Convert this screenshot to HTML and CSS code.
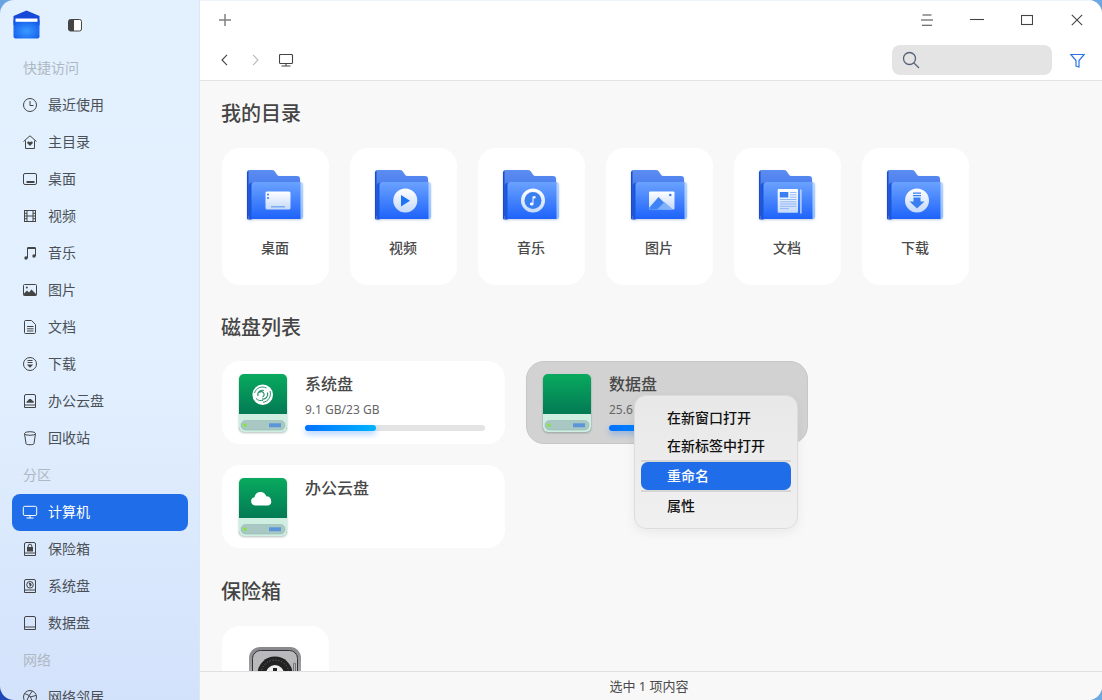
FILE: index.html
```html
<!DOCTYPE html>
<html lang="zh-CN">
<head>
  <meta charset="UTF-8">
  <title>文件管理器</title>
  <link rel="stylesheet" href="styles.css">
</head>
<body>
  <svg class="defs" aria-hidden="true">
    <defs>
      <linearGradient id="gBack" x1="0" y1="0" x2="0" y2="1"><stop offset="0" stop-color="#5b8df2"/><stop offset="1" stop-color="#2b62e0"/></linearGradient>
      <linearGradient id="gFront" x1="0" y1="0" x2="0" y2="1"><stop offset="0" stop-color="#6aa2ff"/><stop offset="1" stop-color="#1e63fb"/></linearGradient>
      <linearGradient id="gEdge" x1="0" y1="0" x2="0" y2="1"><stop offset="0" stop-color="#b9d8ff"/><stop offset="1" stop-color="#8dbcff"/></linearGradient>
      <linearGradient id="gGlyph" x1="0" y1="0" x2="0" y2="1"><stop offset="0" stop-color="#ffffff"/><stop offset="1" stop-color="#c4d9fb"/></linearGradient>
      <linearGradient id="gDrive" x1="0" y1="0" x2="0" y2="1"><stop offset="0" stop-color="#09aa5f"/><stop offset="1" stop-color="#00644f"/></linearGradient>
      <radialGradient id="gLogo" cx=".5" cy=".6" r=".7"><stop offset="0" stop-color="#3a9bff"/><stop offset="1" stop-color="#0f55ea"/></radialGradient>
      <linearGradient id="gSafe" x1="0" y1="0" x2="0" y2="1"><stop offset="0" stop-color="#88888c"/><stop offset="1" stop-color="#c4c4c8"/></linearGradient>

      <symbol id="folder" viewBox="0 0 56 50">
        <path d="M0 3a3 3 0 0 1 3-3h22c2 0 2.500 1 3.500 2.500S30.500 6 32 6h18a3 3 0 0 1 3 3v37H0z" fill="url(#gBack)"/>
        <path d="M0 3a3 3 0 0 1 1.500-2.600V49.500A2 2 0 0 1 0 47z" fill="#1a4bc9"/>
        <path d="M1.500 49.500H5V15a3 3 0 0 1 1-2.500c-2 0-4.500 1.500-4.500 4z" fill="#1f55d8"/>
        <path d="M50 12h3a3 3 0 0 1 3 3v31a3 3 0 0 1-3 3h-3z" fill="url(#gEdge)"/>
        <path d="M4.500 15a3 3 0 0 1 3-3H53.500v37H4.500z" fill="url(#gFront)"/>
      </symbol>

      <symbol id="drive" viewBox="0 0 48 58">
        <rect width="48" height="57.500" rx="5" fill="url(#gDrive)"/>
        <path d="M0 40h48v13a5 5 0 0 1-5 5H5a5 5 0 0 1-5-5z" fill="#cdeee0"/>
        <rect x="2" y="46.500" width="44" height="9.500" rx="4.500" fill="#a9c7c3" stroke="#8fb2ae" stroke-width=".5"/>
        <circle cx="6" cy="51.300" r="2" fill="#8be04e"/>
        <rect x="30" y="49.300" width="12" height="4" fill="#5b97d8"/>
      </symbol>

      <symbol id="i-clock" viewBox="0 0 16 16"><circle cx="8" cy="8" r="6.500"/><path d="M8 4v4.500h3.500"/></symbol>
      <symbol id="i-home" viewBox="0 0 16 16"><path d="M1.500 7.500 8 1.800l6.500 5.700M3.500 6.500v8h9v-8"/><path class="solid" d="M8 12 5.300 9.300c-.6-1.500 1.600-2.300 2.700-1.100 1.100-1.200 3.300-.4 2.700 1.100z"/></symbol>
      <symbol id="i-desktop" viewBox="0 0 16 16"><rect x="1.500" y="2.500" width="13" height="11" rx="1.500"/><path class="heavy" d="M4.500 11h8"/></symbol>
      <symbol id="i-film" viewBox="0 0 16 16"><rect x="2.500" y="2.500" width="11" height="11"/><path d="M5 2.500v11M11 2.500v11M2.500 5.300H5M2.500 8H5M2.500 10.700H5M11 5.300h2.500M11 8h2.500M11 10.700h2.500M5 8h6"/></symbol>
      <symbol id="i-music" viewBox="0 0 16 16"><path d="M5.500 13V3h8v8"/><path class="heavy" d="M5.500 3h8"/><circle class="solid" cx="4" cy="13" r="1.700"/><circle class="solid" cx="12" cy="11" r="1.700"/></symbol>
      <symbol id="i-image" viewBox="0 0 16 16"><rect x="1.500" y="2.500" width="13" height="11" rx="1"/><circle class="solid" cx="4.800" cy="5.500" r="1"/><path class="solid" d="M1.500 13.500V12L5 8.500l2 2 2.500-3 5 5v1z"/></symbol>
      <symbol id="i-doc" viewBox="0 0 16 16"><path d="M3.500 1.500h6L13.500 5.500v8a1 1 0 0 1-1 1h-9a1 1 0 0 1-1-1v-11a1 1 0 0 1 1-1zM5 7.500h6.500M5 9.800h6.500M5 12h6.500"/></symbol>
      <symbol id="i-down" viewBox="0 0 16 16"><circle cx="8" cy="8" r="6.500"/><path d="M5.500 4.500h5M5.500 6.500h5"/><path class="solid" d="M4.800 8.500h6.400L8 11.800z"/></symbol>
      <symbol id="i-disk" viewBox="0 0 16 16"><path d="M4 1.500h8a1.500 1.500 0 0 1 1.500 1.500v11.500h-11V3A1.500 1.500 0 0 1 4 1.500zM2.500 12h11"/></symbol>
      <symbol id="i-cloud" viewBox="0 0 16 16"><path d="M4 1.500h8a1.500 1.500 0 0 1 1.500 1.500v11.500h-11V3A1.500 1.500 0 0 1 4 1.500zM2.500 12h11"/><path class="solid" d="M4.500 9.800C4.300 8 5.700 7.800 6 7.800c.2-2.300 3.800-2.400 4.200-.2 1.400 0 1.900 1.300 1.400 2.200z"/></symbol>
      <symbol id="i-trash" viewBox="0 0 16 16"><ellipse cx="8" cy="3.500" rx="5.500" ry="1.800"/><path d="M2.500 3.500 4 13.500c.2 1 1.500 1.200 4 1.200s3.800-.2 4-1.200l1.500-10"/></symbol>
      <symbol id="i-monitor" viewBox="0 0 16 16"><rect x="1.300" y="2.300" width="13.400" height="9.200" rx="1.500"/><path d="M8 11.500v2.500M4.500 14h7"/></symbol>
      <symbol id="i-safe" viewBox="0 0 16 16"><path d="M4 1.500h8a1.500 1.500 0 0 1 1.500 1.500v11.500h-11V3A1.500 1.500 0 0 1 4 1.500zM2.500 12h11"/><rect class="solid" x="5" y="6" width="6" height="4.500"/><path d="M6.200 6V5a1.800 1.800 0 0 1 3.600 0v1"/></symbol>
      <symbol id="i-sys" viewBox="0 0 16 16"><path d="M4 1.500h8a1.500 1.500 0 0 1 1.500 1.500v11.500h-11V3A1.500 1.500 0 0 1 4 1.500zM2.500 12h11"/><circle cx="8" cy="6.800" r="3.300"/><path class="heavy" d="M7 5.800c1.800-.6 2.400 1.600.6 2"/></symbol>
      <symbol id="i-globe" viewBox="0 0 16 16"><circle cx="8" cy="8" r="6.500"/><path d="M2.500 5c3 0 7 2 8 9M10.500 2c-2 2-5 7-6 11M8 8l6-1.500"/></symbol>
    </defs>
  </svg>

  <div class="window">
    <aside class="sidebar">
      <div class="side-top">
        <svg class="logo" width="27" height="29" viewBox="0 0 27 29">
          <path d="M.5 6 13.500.5 26.500 6v9H.5z" fill="#1749d8"/>
          <path d="M.5 10h26v16.500a2 2 0 0 1-2 2h-22a2 2 0 0 1-2-2z" fill="url(#gLogo)"/>
          <rect x="2.500" y="8.500" width="22" height="3.300" fill="#fff"/>
        </svg>
        <svg class="toggle" width="14" height="13" viewBox="0 0 14 13">
          <rect x=".5" y=".5" width="13" height="11.500" rx="2" fill="#fff" stroke="#444" />
          <path d="M2.500.500H6v11.500H2.500a2 2 0 0 1-2-2V2.500a2 2 0 0 1 2-2z" fill="#444"/>
        </svg>
      </div>
      <div class="side-title">快捷访问</div>
      <div class="side-item"><svg class="side-icon"><use href="#i-clock"/></svg>最近使用</div>
      <div class="side-item"><svg class="side-icon"><use href="#i-home"/></svg>主目录</div>
      <div class="side-item"><svg class="side-icon"><use href="#i-desktop"/></svg>桌面</div>
      <div class="side-item"><svg class="side-icon"><use href="#i-film"/></svg>视频</div>
      <div class="side-item"><svg class="side-icon"><use href="#i-music"/></svg>音乐</div>
      <div class="side-item"><svg class="side-icon"><use href="#i-image"/></svg>图片</div>
      <div class="side-item"><svg class="side-icon"><use href="#i-doc"/></svg>文档</div>
      <div class="side-item"><svg class="side-icon"><use href="#i-down"/></svg>下载</div>
      <div class="side-item"><svg class="side-icon"><use href="#i-cloud"/></svg>办公云盘</div>
      <div class="side-item"><svg class="side-icon"><use href="#i-trash"/></svg>回收站</div>
      <div class="side-title">分区</div>
      <div class="side-item active"><svg class="side-icon"><use href="#i-monitor"/></svg>计算机</div>
      <div class="side-item"><svg class="side-icon"><use href="#i-safe"/></svg>保险箱</div>
      <div class="side-item"><svg class="side-icon"><use href="#i-sys"/></svg>系统盘</div>
      <div class="side-item"><svg class="side-icon"><use href="#i-disk"/></svg>数据盘</div>
      <div class="side-title">网络</div>
      <div class="side-item"><svg class="side-icon"><use href="#i-globe"/></svg>网络邻居</div>
    </aside>

    <main class="main">
      <header class="header">
        <div class="tabbar">
          <svg class="plus" width="14" height="14" viewBox="0 0 14 14"><path d="M7 1v12M1 7h12"/></svg>
          <div class="win-btns">
            <span class="win-btn"><svg width="14" height="14" viewBox="0 0 14 14"><path d="M2.500 2h9M1 7h12M2 12.300h10"/></svg></span>
            <span class="win-btn"><svg width="14" height="14" viewBox="0 0 14 14"><path d="M0 6.500h14"/></svg></span>
            <span class="win-btn"><svg width="12" height="12" viewBox="0 0 12 12"><rect x=".5" y="1.500" width="11" height="9"/></svg></span>
            <span class="win-btn"><svg width="12" height="12" viewBox="0 0 12 12"><path d="M.8.800l10.400 10.400M11.200.800.800 11.200"/></svg></span>
          </div>
        </div>
        <div class="navbar">
          <svg class="nav-back" width="10" height="12" viewBox="0 0 10 12"><path d="M7 .800 2 6l5 5.200"/></svg>
          <svg class="nav-next" width="10" height="12" viewBox="0 0 10 12"><path d="M2 .800 7 6l-5 5.200"/></svg>
          <svg class="nav-pc" width="15" height="13" viewBox="0 0 15 13"><rect x=".5" y=".5" width="13" height="9" rx="1"/><path d="M7 9.500v2.500M2.500 12h9"/></svg>
          <div class="search">
            <svg width="18" height="18" viewBox="0 0 18 18"><circle cx="7.500" cy="7.500" r="6"/><path d="m12 12 5 5"/></svg>
          </div>
          <svg class="filter" width="15" height="15" viewBox="0 0 15 15"><path d="M.8 1.500h13.400L9 7.500V14L6 13V7.500z"/></svg>
        </div>
      </header>

      <section class="content">
        <h2 class="group-title">我的目录</h2>
        <div class="folders">
          <div class="folder-card">
            <svg class="folder-icon" viewBox="0 0 56 50">
              <use href="#folder"/>
              <rect x="18.500" y="21.500" width="25" height="18" rx="1.500" fill="url(#gGlyph)"/>
              <circle cx="21" cy="24.500" r="1" fill="#3b7bf5"/><circle cx="21" cy="28" r="1" fill="#3b7bf5"/>
              <rect x="24" y="36" width="14" height="1.500" fill="#7da9f0"/>
            </svg>
            <span>桌面</span>
          </div>
          <div class="folder-card">
            <svg class="folder-icon" viewBox="0 0 56 50">
              <use href="#folder"/>
              <circle cx="30.300" cy="30.500" r="12" fill="url(#gGlyph)"/>
              <path d="M26 25v11.500l9-5.700z" fill="#1f73f5"/>
            </svg>
            <span>视频</span>
          </div>
          <div class="folder-card">
            <svg class="folder-icon" viewBox="0 0 56 50">
              <use href="#folder"/>
              <circle cx="30" cy="30.500" r="12" fill="url(#gGlyph)"/>
              <circle cx="30" cy="30.500" r="8.500" fill="#3a7ff2"/>
              <path d="M29.500 34V26.500l3-.5v2.300l-2 .3V34a1.800 1.500 0 1 1-1-1.300z" fill="#fff"/>
            </svg>
            <span>音乐</span>
          </div>
          <div class="folder-card">
            <svg class="folder-icon" viewBox="0 0 56 50">
              <use href="#folder"/>
              <rect x="18" y="21.500" width="25.500" height="18" rx="1" fill="url(#gGlyph)"/>
              <path d="M18 38 27.500 27l6 6-2 6.500H19z" fill="#3f83f6"/>
              <path d="M26 39.500 33.500 32l8.500 7.500z" fill="#7fb0fa"/>
              <circle cx="39.300" cy="25" r="1.300" fill="#3a7ff2"/>
            </svg>
            <span>图片</span>
          </div>
          <div class="folder-card">
            <svg class="folder-icon" viewBox="0 0 56 50">
              <use href="#folder"/>
              <rect x="18.700" y="19" width="20.300" height="23.700" rx="1" fill="url(#gGlyph)"/>
              <rect x="20.800" y="22" width="8.500" height="5.500" fill="#3a7ff2"/>
              <path d="M31 22.500h6.500M31 24.800h6.500M31 27.200h6.500M21 29.500h16.500M21 31.800h16.500M21 34h16.500M21 36.300h16.500M21 38.600h9" stroke="#7da9f0" stroke-width=".8"/>
              <rect x="41.300" y="19.500" width="1.200" height="24" fill="#dbe8fd"/>
            </svg>
            <span>文档</span>
          </div>
          <div class="folder-card">
            <svg class="folder-icon" viewBox="0 0 56 50">
              <use href="#folder"/>
              <circle cx="30" cy="30.500" r="12" fill="url(#gGlyph)"/>
              <path d="M26 22.500h8v1.300h-8zM26 25h8v1.300h-8zM26.500 27.500h7v4h4L30 38.500l-7.500-7h4z" fill="#3a7ff2"/>
            </svg>
            <span>下载</span>
          </div>
        </div>

        <h2 class="group-title disks-title">磁盘列表</h2>
        <div class="disks">
          <div class="disk-card">
            <svg class="drive" viewBox="0 0 48 58"><use href="#drive"/>
              <circle cx="23.700" cy="20.700" r="10.300" fill="#fff"/>
              <path d="M15.500 19c1.500-5 7-7.500 12-5M31 17c1.500 5.500-1.500 10.500-7 11.300M17 24.500c2 2.200 5 2.500 7 1.800" fill="none" stroke="#2a9270" stroke-width="1"/>
              <path d="M19 22c-1-4 2.500-6.500 6-5.500M28.500 18.500c1 4-1.500 7-5.500 6.500M20 18.500c1.500-1 3.500-1 4.500.3 1.200 1.500.7 3.500-1 4.200" fill="none" stroke="#2a9270" stroke-width="1.200"/>
            </svg>
            <div class="disk-info">
              <div class="disk-name">系统盘</div>
              <div class="disk-size">9.1 GB/23 GB</div>
              <div class="bar"><div class="bar-fill" style="width:71px"></div></div>
            </div>
          </div>
          <div class="disk-card selected">
            <svg class="drive" viewBox="0 0 48 58"><use href="#drive"/></svg>
            <div class="disk-info">
              <div class="disk-name">数据盘</div>
              <div class="disk-size">25.6 GB/40 GB</div>
              <div class="bar"><div class="bar-fill" style="width:112px"></div></div>
            </div>
          </div>
          <div class="disk-card">
            <svg class="drive" viewBox="0 0 48 58"><use href="#drive"/>
              <path d="M16 27.500a4.200 4.200 0 0 1-.5-8.300c.6-3.900 3.700-5.700 6.900-5.200 2.400.4 4.200 2 4.900 4.200a5 5 0 0 1 4.900 4.700 4.200 4.200 0 0 1-2.700 4.600z" fill="#fff"/>
            </svg>
            <div class="disk-info">
              <div class="disk-name">办公云盘</div>
            </div>
          </div>
        </div>

        <h2 class="group-title vault-title">保险箱</h2>
        <div class="folder-card vault-card">
          <svg class="safe" width="52" height="52" viewBox="0 0 52 52">
            <rect width="52" height="52" rx="11" fill="url(#gSafe)"/>
            <rect x="3.500" y="3.500" width="45" height="45" rx="8" fill="#b9b9bc" stroke="#333" stroke-width="1"/>
            <circle cx="26" cy="27" r="17.500" fill="#222"/>
            <circle cx="26" cy="27" r="14" fill="none" stroke="#777" stroke-width="1" stroke-dasharray="1 2"/>
            <circle cx="26" cy="27" r="9" fill="#eee"/>
            <rect x="24" y="21" width="4" height="3" fill="#222"/>
            <rect x="44.500" y="16" width="2" height="20" rx="1" fill="none" stroke="#555" stroke-width=".7"/>
          </svg>
        </div>
      </section>

      <footer class="status">选中 1 项内容</footer>

      <ul class="menu">
        <li>在新窗口打开</li>
        <li>在新标签中打开</li>
        <li class="menu-sep"></li>
        <li class="hover">重命名</li>
        <li class="menu-sep"></li>
        <li>属性</li>
      </ul>
    </main>
  </div>
</body>
</html>
```

FILE: styles.css
```css
* {
  box-sizing: border-box;
}
html, body {
  margin: 0;
  height: 100%;
}
body {
  overflow: hidden;
  font-family: "Noto Sans", "Noto Sans CJK SC", sans-serif;
  background: linear-gradient(215deg, #6ea8e2 0%, #6ea8e2 50%, #1f47b8 100%);
}
.defs {
  position: absolute;
  width: 0;
  height: 0;
}
.window {
  display: flex;
  width: 1102px;
  height: 700px;
  border-radius: 14px;
  overflow: hidden;
}

/* sidebar */
.sidebar {
  flex: 0 0 200px;
  padding: 0 11px 0 12px;
  overflow: hidden;
  background: linear-gradient(180deg, #e3f1ff 0%, #e1effe 55%, #d3e2fb 100%);
  border-right: 1px solid #dfe6f0;
}
.side-top {
  display: flex;
  align-items: center;
  height: 50px;
  gap: 28px;
}
.logo {
  margin: -1px 0 0 1px;
}
.side-title {
  height: 37px;
  padding: 0 0 2px 11px;
  line-height: 35px;
  font-size: 14px;
  color: #aeb8c3;
}
.side-item {
  display: flex;
  align-items: center;
  gap: 10px;
  height: 37px;
  padding: 0 0 1px 10px;
  border-radius: 8px;
  font-size: 14px;
  line-height: 20px;
  color: #4b5058;
}
.side-icon {
  width: 16px;
  height: 16px;
  flex: none;
  fill: none;
  stroke: #444;
  stroke-width: 1;
  color: #444;
}
.side-item.active {
  background: #1f6de8;
  color: #fff;
}
.side-item.active .side-icon {
  stroke: #fff;
  color: #fff;
}
symbol .solid {
  fill: currentColor;
  stroke: none;
}
symbol .heavy {
  stroke-width: 1.800;
}

/* main part */
.main {
  position: relative;
  flex: 1;
  display: flex;
  flex-direction: column;
  min-width: 0;
  background: #f8f8f8;
}
.header {
  flex: none;
  height: 81px;
  background: #fff;
  border-top: 1px solid #edf4fc;
  border-bottom: 1px solid #e4e4e4;
}
.header svg {
  fill: none;
  stroke: #444;
  stroke-width: 1.100;
}
.tabbar {
  display: flex;
  align-items: center;
  justify-content: space-between;
  height: 38px;
  padding-left: 18px;
}
.tabbar .plus {
  stroke: #808080;
  stroke-width: 1.500;
}
.win-btns {
  display: flex;
  align-items: center;
}
.win-btn {
  display: flex;
  align-items: center;
  justify-content: center;
  width: 50px;
  height: 38px;
}
.navbar {
  display: flex;
  align-items: center;
  height: 41px;
  padding: 1px 17px 0 20px;
}
.nav-next {
  margin-left: 21px;
}
.header .nav-next {
  stroke: #b8b8b8;
}
.nav-pc {
  margin-left: 18px;
}
.search {
  display: flex;
  align-items: center;
  width: 160px;
  height: 30px;
  margin-left: auto;
  padding-left: 10px;
  border-radius: 8px;
  background: #e4e4e4;
}
.header .search svg {
  stroke: #56637a;
  stroke-width: 1.300;
}
.header .filter {
  margin-left: 18px;
  stroke: #2b74e8;
  stroke-width: 1.200;
}
.content {
  flex: 1;
  min-height: 0;
  overflow: hidden;
  padding: 19px 0 0 22px;
}
.group-title {
  margin: 0 0 20px -1px;
  height: 28px;
  line-height: 28px;
  font-size: 20px;
  font-weight: 500;
  color: #454545;
}
.disks-title {
  margin-top: 29px;
  margin-bottom: 19px;
}
.vault-title {
  margin-top: 30px;
  margin-bottom: 20px;
}
.folders {
  display: grid;
  grid-template-columns: repeat(6, 107px);
  gap: 21px;
}
.folder-card {
  display: flex;
  flex-direction: column;
  align-items: center;
  width: 107px;
  height: 137px;
  padding-top: 22px;
  border-radius: 18px;
  background: #fff;
  font-size: 14px;
  font-weight: 500;
  color: #4a4a4a;
}
.folder-icon {
  width: 56px;
  height: 50px;
  margin-bottom: 18px;
  margin-left: -1px;
  filter: drop-shadow(0 1px 1px rgba(30, 60, 140, 0.25));
}
.folder-card span {
  line-height: 20px;
  margin-left: -1px;
}
.disks {
  display: grid;
  grid-template-columns: repeat(2, 283px);
  grid-auto-rows: 83px;
  gap: 21px;
}
.disk-card {
  display: flex;
  gap: 18px;
  padding: 13px 17px;
  border-radius: 18px;
  background: #fff;
}
.disk-card.selected {
  background: #d2d2d2;
  border: 1px solid #c6c6c6;
  padding: 12px 16px;
  width: 282px;
}
.drive {
  flex: none;
  width: 48px;
  height: 58px;
  filter: drop-shadow(0 1px 1px rgba(0, 40, 30, 0.3));
}
.disk-info {
  flex: 1;
  min-width: 0;
}
.disk-name {
  height: 22px;
  margin-top: -1px;
  line-height: 22px;
  font-size: 16px;
  font-weight: 500;
  color: #484848;
}
.disk-size {
  height: 18px;
  margin-top: 6px;
  line-height: 18px;
  font-size: 12px;
  color: #666;
}
.bar {
  width: 180px;
  height: 6px;
  margin-top: 6px;
  border-radius: 3px;
  background: #e4e4e4;
}
.bar-fill {
  height: 6px;
  border-radius: 3px;
  background: linear-gradient(90deg, #0070ff, #00b4ff);
  box-shadow: 0 3px 6px rgba(0, 112, 255, 0.35);
}
.vault-card {
  padding-top: 21px;
}
.safe {
  flex: none;
  margin-left: -1px;
}
.status {
  flex: none;
  height: 29px;
  padding-right: 4px;
  line-height: 29px;
  text-align: center;
  font-size: 13px;
  color: #4a4a4a;
  background: #f8f8f8;
  border-top: 1px solid #e0e0e0;
}

/* context menu */
.menu {
  position: absolute;
  left: 434px;
  top: 395px;
  width: 164px;
  height: 134px;
  margin: 0;
  padding: 8px 6px 0;
  list-style: none;
  border: 1px solid #dcdcdc;
  border-radius: 12px;
  background: linear-gradient(180deg, #e8e8e8, #f0f0f0);
  box-shadow: 0 4px 12px rgba(0, 0, 0, 0.06);
  font-size: 14px;
  font-weight: 500;
  color: #111;
}
.menu li {
  height: 28px;
  padding-left: 26px;
  line-height: 28px;
  border-radius: 7px;
}
.menu li.menu-sep {
  height: 2px;
  padding: 0;
  border-radius: 0;
  background: #d6d6d6;
}
.menu li.hover {
  background: #1f6de8;
  color: #fff;
}
```
